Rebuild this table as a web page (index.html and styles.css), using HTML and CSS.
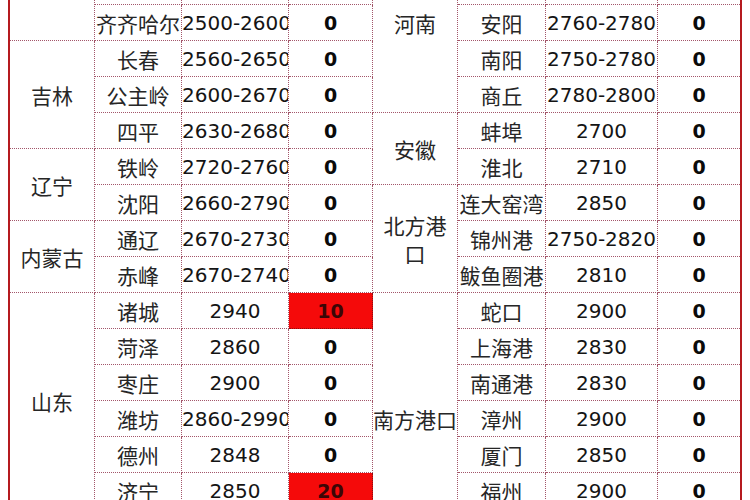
FILE: index.html
```html
<!DOCTYPE html>
<html lang="zh-CN">
<head>
<meta charset="utf-8">
<title>价格表</title>
<link rel="stylesheet" href="styles.css">
</head>
<body>
<div class="sheet">
  <div class="c prov s3"></div><div class="c"></div><div class="c num"></div><div class="c chg"></div>
  <div class="c prov s5">河南</div><div class="c"></div><div class="c num"></div><div class="c chg last"></div>

  <div class="c"></div><div class="c num"></div><div class="c chg"></div>
  <div class="c"></div><div class="c num"></div><div class="c chg last"></div>

  <div class="c">齐齐哈尔</div><div class="c num">2500-2600</div><div class="c chg">0</div>
  <div class="c">安阳</div><div class="c num">2760-2780</div><div class="c chg last">0</div>

  <div class="c prov s3">吉林</div><div class="c">长春</div><div class="c num">2560-2650</div><div class="c chg">0</div>
  <div class="c">南阳</div><div class="c num">2750-2780</div><div class="c chg last">0</div>

  <div class="c">公主岭</div><div class="c num">2600-2670</div><div class="c chg">0</div>
  <div class="c">商丘</div><div class="c num">2780-2800</div><div class="c chg last">0</div>

  <div class="c">四平</div><div class="c num">2630-2680</div><div class="c chg">0</div>
  <div class="c prov s2">安徽</div><div class="c">蚌埠</div><div class="c num">2700</div><div class="c chg last">0</div>

  <div class="c prov s2">辽宁</div><div class="c">铁岭</div><div class="c num">2720-2760</div><div class="c chg">0</div>
  <div class="c">淮北</div><div class="c num">2710</div><div class="c chg last">0</div>

  <div class="c">沈阳</div><div class="c num">2660-2790</div><div class="c chg">0</div>
  <div class="c prov s3 wrap">北方港<br>口</div><div class="c">连大窑湾</div><div class="c num">2850</div><div class="c chg last">0</div>

  <div class="c prov s2">内蒙古</div><div class="c">通辽</div><div class="c num">2670-2730</div><div class="c chg">0</div>
  <div class="c">锦州港</div><div class="c num">2750-2820</div><div class="c chg last">0</div>

  <div class="c">赤峰</div><div class="c num">2670-2740</div><div class="c chg">0</div>
  <div class="c">鲅鱼圈港</div><div class="c num">2810</div><div class="c chg last">0</div>

  <div class="c prov s6">山东</div><div class="c">诸城</div><div class="c num">2940</div><div class="c chg up">10</div>
  <div class="c prov s7">南方港口</div><div class="c">蛇口</div><div class="c num">2900</div><div class="c chg last">0</div>

  <div class="c">菏泽</div><div class="c num">2860</div><div class="c chg">0</div>
  <div class="c">上海港</div><div class="c num">2830</div><div class="c chg last">0</div>

  <div class="c">枣庄</div><div class="c num">2900</div><div class="c chg">0</div>
  <div class="c">南通港</div><div class="c num">2830</div><div class="c chg last">0</div>

  <div class="c">潍坊</div><div class="c num">2860-2990</div><div class="c chg">0</div>
  <div class="c">漳州</div><div class="c num">2900</div><div class="c chg last">0</div>

  <div class="c">德州</div><div class="c num">2848</div><div class="c chg">0</div>
  <div class="c">厦门</div><div class="c num">2850</div><div class="c chg last">0</div>

  <div class="c">济宁</div><div class="c num">2850</div><div class="c chg up">20</div>
  <div class="c">福州</div><div class="c num">2900</div><div class="c chg last">0</div>

  <div class="c prov"></div><div class="c"></div><div class="c num"></div><div class="c chg"></div>
  <div class="c"></div><div class="c num"></div><div class="c chg last"></div>
</div>
</body>
</html>
```
FILE: styles.css
```css
html, body {
  margin: 0;
  padding: 0;
  background: #ffffff;
}
body {
  width: 750px;
  height: 500px;
  overflow: hidden;
}
.sheet {
  margin: -67px 0 0 8px;
  width: 730px;
  display: grid;
  grid-template-columns: 85px 87px 107px 84px 85px 88px 112px 82px;
  grid-auto-rows: 36px;
  border-left: 2px solid #b51a1f;
  border-right: 2px solid #b51a1f;
}
.c {
  box-sizing: border-box;
  border-right: 1px dotted #a3566a;
  border-bottom: 1px dotted #a3566a;
  display: flex;
  align-items: center;
  justify-content: safe center;
  overflow: hidden;
  white-space: nowrap;
  font-family: "Noto Sans CJK SC", sans-serif;
  font-size: 21px;
  color: #262626;
}
.c.last { border-right: none; }
.prov { grid-row: span 1; }
.s2 { grid-row: span 2; }
.s3 { grid-row: span 3; }
.s5 { grid-row: span 5; }
.s6 { grid-row: span 6; }
.s7 { grid-row: span 7; }
.wrap {
  white-space: normal;
  text-align: center;
  line-height: 28px;
}
.num {
  font-family: "DejaVu Sans", "Noto Sans CJK SC", sans-serif;
  font-size: 20px;
  color: #141414;
}
.chg {
  font-family: "DejaVu Sans", "Noto Sans CJK SC", sans-serif;
  font-weight: bold;
  font-size: 19px;
  color: #0a0a0a;
}
.up {
  background: #f50a0a;
  color: #3c0606;
  border-right: 1px dotted #8a1010;
  border-bottom: 1px dotted #8a1010;
}
```
